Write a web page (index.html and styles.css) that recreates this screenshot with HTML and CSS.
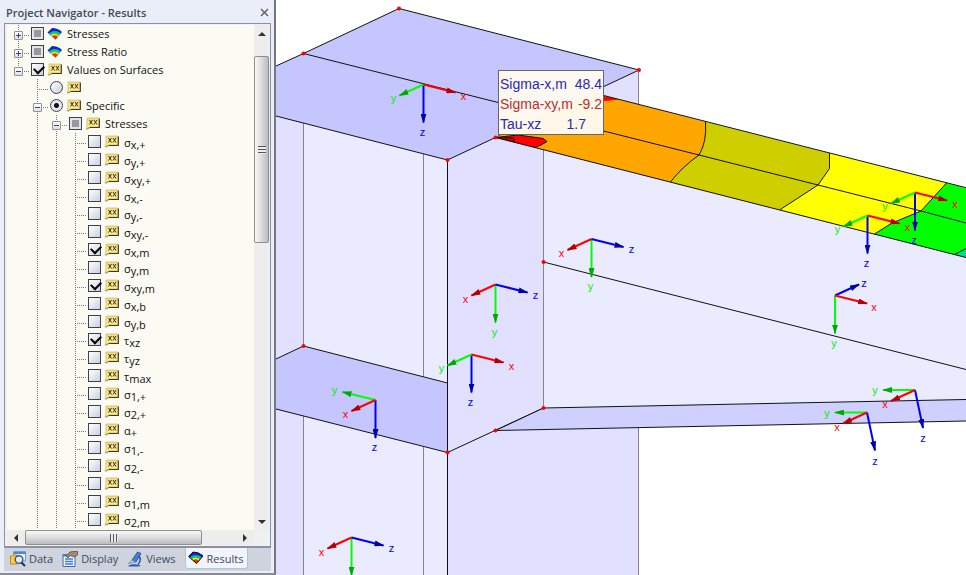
FILE: index.html
```html
<!DOCTYPE html>
<html lang="en">
<head>
<meta charset="utf-8">
<title>Project Navigator - Results</title>
<link rel="stylesheet" href="styles.css">
</head>
<body>
<svg class="sprite" aria-hidden="true">
  <defs>
    <linearGradient id="note-fill" x1="0" y1="0" x2="0" y2="1"><stop offset="0" stop-color="#f3d983"/><stop offset="1" stop-color="#fbf58a"/></linearGradient>
    <symbol id="note" viewBox="0 0 16 14">
      <path d="M3 2H15V11H5L1 13L3 10Z" fill="#55503c" opacity=".75"/>
      <path d="M2 1H14V10H4.500L1 12L2 9Z" fill="url(#note-fill)" stroke="#c2ab55" stroke-width=".6"/>
      <path d="M14.300 1.500V10.500H5" fill="none" stroke="#3c382b" stroke-width="1"/>
      <path d="M4.500 3L7.500 7.500M7.500 3L4.500 7.500M9 3L12 7.500M12 3L9 7.500" stroke="#3a321c" stroke-width="1"/>
    </symbol>
    <symbol id="fan" viewBox="0 0 16 14">
      <path d="M0.500 5.500L5 1Q11 1 15 5L8.500 12.500Z" fill="#1722c5"/>
      <path d="M1.500 6.500Q7 1.500 13.800 6.300L8.500 12.300Z" fill="#00b4f0"/>
      <path d="M2.500 7.300Q7.500 3 12.800 7.500L8.500 12.300Z" fill="#19d52b"/>
      <path d="M3.700 8.300Q7.800 5 11.800 8.600L8.500 12.300Z" fill="#fff000"/>
      <path d="M5 9.500Q8 7 10.800 9.700L8.500 12.500Z" fill="#f42a10"/>
    </symbol>
    <symbol id="fan-outlined" viewBox="0 0 16 14">
      <use href="#fan" width="16" height="14"/>
      <path d="M0.700 5.500L5 1Q11 1 15 5L8.500 12.500Z" fill="none" stroke="#111" stroke-width="1"/>
    </symbol>
    <symbol id="data" viewBox="0 0 16 16">
      <path d="M4 1H15.500V10H4Z" fill="#eaf2fd" stroke="#6b93d5"/>
      <path d="M3.500 0.500H16V3H3.500Z" fill="#4f85df"/>
      <path d="M0.500 5H3L4 4H7V13H0.500Z" fill="#f8cd45" stroke="#be8918"/>
      <circle cx="9" cy="8.500" r="3.800" fill="#d9ebfc" stroke="#40577e" stroke-width="1.400"/>
      <path d="M11.500 11.500L15 15" stroke="#20365f" stroke-width="2.200"/>
    </symbol>
    <symbol id="display" viewBox="0 0 16 16">
      <path d="M1 3.500H13V15.500H1Z" fill="#f3f8ff" stroke="#3f67a9"/>
      <path d="M1 3H8V5.500H1Z" fill="#4c79c7"/>
      <path d="M3 8H11M3 10.500H11M3 13H11" stroke="#397ede" stroke-width="1.300"/>
      <path d="M4 5L8 1L11 0.500H15.500V4L12 6L8 4.500L6 7Z" fill="#a68772" stroke="#544137" stroke-width=".7"/>
    </symbol>
    <symbol id="views" viewBox="0 0 16 16">
      <path d="M1 15C4 13 7 12.500 14 14.500L12 15.500H2Z" fill="#275eae"/>
      <path d="M10.500 1L14 2.500L9 11L5 9Z" fill="#477fd0" stroke="#214c94" stroke-width=".8"/>
      <path d="M5 9L1.500 12.500L8.500 11Z" fill="#c7dcf4" stroke="#5277b0" stroke-width=".7"/>
      <path d="M12 5Q15 9 11 13.500" fill="none" stroke="#2b5498" stroke-width="1.500"/>
    </symbol>
  </defs>
</svg>
<div class="app">
  <aside class="navigator">
    <header class="titlebar">
      <h1>Project Navigator - Results</h1>
      <button class="close" aria-label="Close"><svg viewBox="0 0 9 9"><path d="M1 1L8 8M8 1L1 8" stroke="#555" stroke-width="1.200"/></svg></button>
    </header>
    <div class="pane">
      <ul class="tree root">
        <li><div class="row"><button class="twig plus" aria-label="Expand"></button><label><input type="checkbox" class="mixed"><svg class="icon"><use href="#fan"/></svg><span>Stresses</span></label></div></li>
        <li><div class="row"><button class="twig plus" aria-label="Expand"></button><label><input type="checkbox" class="mixed"><svg class="icon"><use href="#fan"/></svg><span>Stress Ratio</span></label></div></li>
        <li><div class="row"><button class="twig" aria-label="Collapse"></button><label><input type="checkbox" checked><svg class="icon"><use href="#note"/></svg><span>Values on Surfaces</span></label></div>
          <ul class="tree">
            <li><div class="row"><label><input type="radio" name="values" aria-label="All values"><svg class="icon"><use href="#note"/></svg></label></div></li>
            <li><div class="row"><button class="twig" aria-label="Collapse"></button><label><input type="radio" name="values" checked><svg class="icon"><use href="#note"/></svg><span>Specific</span></label></div>
              <ul class="tree">
                <li><div class="row"><button class="twig" aria-label="Collapse"></button><label><input type="checkbox" class="mixed"><svg class="icon"><use href="#note"/></svg><span>Stresses</span></label></div>
                  <ul class="tree symbols">
                    <li><div class="row"><label><input type="checkbox"><svg class="icon"><use href="#note"/></svg><span>σ<sub>x,+</sub></span></label></div></li>
                    <li><div class="row"><label><input type="checkbox"><svg class="icon"><use href="#note"/></svg><span>σ<sub>y,+</sub></span></label></div></li>
                    <li><div class="row"><label><input type="checkbox"><svg class="icon"><use href="#note"/></svg><span>σ<sub>xy,+</sub></span></label></div></li>
                    <li><div class="row"><label><input type="checkbox"><svg class="icon"><use href="#note"/></svg><span>σ<sub>x,-</sub></span></label></div></li>
                    <li><div class="row"><label><input type="checkbox"><svg class="icon"><use href="#note"/></svg><span>σ<sub>y,-</sub></span></label></div></li>
                    <li><div class="row"><label><input type="checkbox"><svg class="icon"><use href="#note"/></svg><span>σ<sub>xy,-</sub></span></label></div></li>
                    <li><div class="row"><label><input type="checkbox" checked><svg class="icon"><use href="#note"/></svg><span>σ<sub>x,m</sub></span></label></div></li>
                    <li><div class="row"><label><input type="checkbox"><svg class="icon"><use href="#note"/></svg><span>σ<sub>y,m</sub></span></label></div></li>
                    <li><div class="row"><label><input type="checkbox" checked><svg class="icon"><use href="#note"/></svg><span>σ<sub>xy,m</sub></span></label></div></li>
                    <li><div class="row"><label><input type="checkbox"><svg class="icon"><use href="#note"/></svg><span>σ<sub>x,b</sub></span></label></div></li>
                    <li><div class="row"><label><input type="checkbox"><svg class="icon"><use href="#note"/></svg><span>σ<sub>y,b</sub></span></label></div></li>
                    <li><div class="row"><label><input type="checkbox" checked><svg class="icon"><use href="#note"/></svg><span>τ<sub>xz</sub></span></label></div></li>
                    <li><div class="row"><label><input type="checkbox"><svg class="icon"><use href="#note"/></svg><span>τ<sub>yz</sub></span></label></div></li>
                    <li><div class="row"><label><input type="checkbox"><svg class="icon"><use href="#note"/></svg><span>τ<sub>max</sub></span></label></div></li>
                    <li><div class="row"><label><input type="checkbox"><svg class="icon"><use href="#note"/></svg><span>σ<sub>1,+</sub></span></label></div></li>
                    <li><div class="row"><label><input type="checkbox"><svg class="icon"><use href="#note"/></svg><span>σ<sub>2,+</sub></span></label></div></li>
                    <li><div class="row"><label><input type="checkbox"><svg class="icon"><use href="#note"/></svg><span>α<sub>+</sub></span></label></div></li>
                    <li><div class="row"><label><input type="checkbox"><svg class="icon"><use href="#note"/></svg><span>σ<sub>1,-</sub></span></label></div></li>
                    <li><div class="row"><label><input type="checkbox"><svg class="icon"><use href="#note"/></svg><span>σ<sub>2,-</sub></span></label></div></li>
                    <li><div class="row"><label><input type="checkbox"><svg class="icon"><use href="#note"/></svg><span>α<sub>-</sub></span></label></div></li>
                    <li><div class="row"><label><input type="checkbox"><svg class="icon"><use href="#note"/></svg><span>σ<sub>1,m</sub></span></label></div></li>
                    <li><div class="row"><label><input type="checkbox"><svg class="icon"><use href="#note"/></svg><span>σ<sub>2,m</sub></span></label></div></li>
                  </ul>
                </li>
              </ul>
            </li>
          </ul>
        </li>
      </ul>
      <div class="bar vertical">
        <button class="arrow up" aria-label="Scroll up"></button>
        <div class="track"><div class="thumb"><i></i></div></div>
        <button class="arrow down" aria-label="Scroll down"></button>
      </div>
      <div class="bar horizontal">
        <button class="arrow left" aria-label="Scroll left"></button>
        <div class="track"><div class="thumb"><i></i></div></div>
        <button class="arrow right" aria-label="Scroll right"></button>
      </div>
    </div>
    <nav class="tabs">
      <button class="tab"><svg><use href="#data"/></svg>Data</button>
      <button class="tab"><svg><use href="#display"/></svg>Display</button>
      <button class="tab"><svg><use href="#views"/></svg>Views</button>
      <button class="tab active"><svg><use href="#fan-outlined"/></svg>Results</button>
    </nav>
  </aside>
  <main class="viewport">
    <svg class="model" viewBox="276 0 690 575" preserveAspectRatio="xMinYMin slice">
      <defs>
        <marker id="head-x" markerUnits="userSpaceOnUse" markerWidth="10" markerHeight="6" refX="9" refY="3" orient="auto"><path d="M0 0L10 3L0 6Z" fill="#b40000"/></marker>
        <marker id="head-y" markerUnits="userSpaceOnUse" markerWidth="10" markerHeight="6" refX="9" refY="3" orient="auto"><path d="M0 0L10 3L0 6Z" fill="#00a800"/></marker>
        <marker id="head-z" markerUnits="userSpaceOnUse" markerWidth="10" markerHeight="6" refX="9" refY="3" orient="auto"><path d="M0 0L10 3L0 6Z" fill="#0000a8"/></marker>
        <g id="axes-top">
          <path class="az" d="M0 0V38"/><path class="ay" d="M0 0L-24 11"/><path class="ax" d="M0 0L32 8"/>
          <text class="tx" x="40" y="15">x</text><text class="ty" x="-30" y="17">y</text><text class="tz" x="-1" y="51">z</text>
        </g>
        <g id="axes-side">
          <path class="ay" d="M0 0V38"/><path class="ax" d="M0 0L-24 11"/><path class="az" d="M0 0L32 8"/>
          <text class="tx" x="-30" y="18">x</text><text class="ty" x="-1" y="51">y</text><text class="tz" x="40" y="14">z</text>
        </g>
        <g id="axes-slab">
          <path class="az" d="M0 0V38"/><path class="ay" d="M0 0L-33 -8"/><path class="ax" d="M0 0L-24 11"/>
          <text class="tx" x="-30" y="18">x</text><text class="ty" x="-41" y="-6">y</text><text class="tz" x="-1" y="51">z</text>
        </g>
        <g id="axes-web">
          <path class="az" d="M0 0L24 -11"/><path class="ay" d="M0 0V38"/><path class="ax" d="M0 0L32 8"/>
          <text class="tx" x="39" y="15">x</text><text class="ty" x="-1" y="51">y</text><text class="tz" x="29" y="-9">z</text>
        </g>
        <g id="axes-flange">
          <path class="az" d="M0 0L8 38"/><path class="ay" d="M0 0H-32"/><path class="ax" d="M0 0L-24 11"/>
          <text class="tx" x="-30" y="18">x</text><text class="ty" x="-40" y="4">y</text><text class="tz" x="8" y="52">z</text>
        </g>
      </defs>

      <!-- column faces -->
      <path class="shade" d="M276 115H303.500V575H276ZM447.500 130H543.500V425H639V575H447.500ZM590 80L639 70V110H590Z"/>
      <path class="light" d="M303.500 115H447.500V575H303.500Z"/>
      <path class="light" d="M543.500 145L966 257V400L543.500 408Z"/>
      <path class="grey" d="M303.500 120V575M423.500 150V575M543.500 148V408M638.500 70V106M638.500 428V575"/>

      <!-- slabs -->
      <path class="slab" d="M276 66L303.500 53.500L399 8.500L639 70L447.500 160L276 116Z"/>
      <path class="edge" d="M276 66L303.500 53.500L399 8.500L639 70L447.500 160L276 116M303.500 53.500L520 108"/>
      <path class="slab" d="M276 359L303.500 346L447.500 383V452.500L276 409Z"/>
      <path class="edge" d="M276 359L303.500 346L447.500 383M276 409L447.500 452.500L543.500 408"/>
      <path class="edge" d="M447.500 160V575"/>

      <!-- stress bands -->
      <path fill="#ffa600" d="M495.500 137.500L590 92L705.500 121.700Q707 142 699 155Q682 167 670.500 182L495.500 137.500Z"/>
      <path fill="#cfcf00" d="M705.500 121.700L829.500 153.300V168.500L818 185L780 209.700L670.500 182Q682 167 699 155Q707 142 705.500 121.700Z"/>
      <path fill="#ffff00" d="M829.500 153.300L946.500 183L921 211L892 223L874.500 234L780 209.700L818 185L829.500 168.500Z"/>
      <path fill="#00ff00" d="M946.500 183L966 188V257.500L874.500 234L892 223L921 211Z"/>
      <path fill="#00dd87" d="M954.500 254.500L966 248.500V257.500Z"/>
      <path fill="#ff0000" d="M495.500 137.500L518 135L543 138.500L547 141.500L541 145L535 147.500ZM595 94L619 99.500L596 102Z"/>
      <path fill="#c80000" d="M495.500 137.500L514 138V142Z"/>
      <path class="edge" d="M590 92L966 187.700M560 120L699 155L818 185L921 211L966 223M495.500 137.500L966 257.500M705.500 121.700Q707 142 699 155Q682 167 670.500 182M829.500 153.300V168.500L818 185L780 209.700M946.500 183L921 211L892 223L874.500 234M954.500 254.500L966 248.500M495.500 137.500L518 135L543 138.500L547 141.500L541 145L535 147.500M495.500 137.500L514 138V142"/>

      <!-- web line and bottom flange -->
      <path class="edge" d="M543.500 262L966 369.500"/>
      <path fill="#d0d0ff" d="M495.500 430.500L543.500 408L966 399.500V421Z"/>
      <path class="edge" d="M495.500 430.500L543.500 408L966 399.500M966 421L495.500 430.500"/>

      <g fill="#f00">
        <circle cx="399" cy="8.500" r="2"/><circle cx="303.500" cy="53.500" r="2"/><circle cx="639" cy="70" r="2"/><circle cx="495.500" cy="137.500" r="2"/><circle cx="447.500" cy="160" r="2"/><circle cx="303.500" cy="346" r="2"/><circle cx="447.500" cy="452.500" r="2"/><circle cx="495.500" cy="430.500" r="2"/><circle cx="543.500" cy="262" r="2"/><circle cx="543.500" cy="408" r="2"/>
      </g>

      <use href="#axes-top" x="423.500" y="84.500"/>
      <use href="#axes-top" x="471.500" y="354.500"/>
      <use href="#axes-top" x="867.500" y="215.500"/>
      <use href="#axes-top" x="915" y="192.500"/>
      <use href="#axes-side" x="495.500" y="284.500"/>
      <use href="#axes-side" x="591.500" y="239"/>
      <use href="#axes-side" x="351.500" y="537.500"/>
      <use href="#axes-slab" x="375.500" y="400"/>
      <use href="#axes-web" x="835" y="295.500"/>
      <use href="#axes-flange" x="915" y="390"/>
      <use href="#axes-flange" x="867" y="412.500"/>

      <g class="values">
        <rect x="498.500" y="70.500" width="105" height="64"/>
        <text x="500" y="89">Sigma-x,m</text><text x="602" y="89" text-anchor="end">48.4</text>
        <text class="neg" x="500" y="109">Sigma-xy,m</text><text class="neg" x="602" y="109" text-anchor="end">-9.2</text>
        <text x="500" y="129">Tau-xz</text><text x="586" y="129" text-anchor="end">1.7</text>
      </g>
    </svg>
  </main>
</div>
</body>
</html>
```
FILE: styles.css
```css
* { box-sizing: border-box; }

body {
  margin: 0;
  font-family: "Open Sans", "Noto Sans", sans-serif;
  font-size: 12px;
  color: #111;
  background: #fff;
}

button { padding: 0; border: 0; background: none; font: inherit; color: inherit; }
.sprite { position: absolute; width: 0; height: 0; }

.app {
  display: grid;
  grid-template-columns: 276px 1fr;
  height: 100vh;
  overflow: hidden;
}

/* navigator panel */
.navigator {
  display: flex;
  flex-direction: column;
  min-height: 0;
  padding: 1px 3px 2px 4px;
  background: #e9eef8;
  border-right: 2px solid #777783;
  border-bottom: 2px solid #8a8b96;
}

.titlebar {
  flex: none;
  display: flex;
  align-items: center;
  justify-content: space-between;
  height: 22px;
  padding: 0 2px 0 2px;
}

h1 { margin: 0; font-size: 11px; font-weight: 600; color: #444a55; }
.close { width: 9px; height: 9px; }
.close svg { display: block; width: 9px; height: 9px; }

.pane {
  flex: 1;
  min-height: 0;
  display: grid;
  grid-template-columns: 1fr 15px;
  grid-template-rows: 1fr 15px;
  border: 1px solid #8c90a2;
  border-bottom-width: 2px;
  padding: 1px 1px 1px 2px;
  background: #f0f0f0;
}

/* tree */
.tree { margin: 0; padding: 0; list-style: none; }
.root { min-height: 0; overflow: hidden; background: #fbfbf4; }
.tree .tree { padding-left: 19px; }

.tree li {
  background: repeating-linear-gradient(#777 0 1px, transparent 1px 2px) 11px 0 / 1px 100% no-repeat;
}
.root > li:last-child { background-size: 1px 9px; }

.row {
  display: flex;
  align-items: center;
  height: 18px;
  padding-left: 11px;
  background: repeating-linear-gradient(90deg, #777 0 1px, transparent 1px 2px) 11px 10px / 12px 1px no-repeat;
}

.row label { display: flex; align-items: center; flex: 1; padding-left: 13px; }
.twig + label { padding-left: 8px; }

.twig {
  flex: none;
  width: 9px;
  height: 9px;
  margin: 2px 0 0 -4px;
  border: 1px solid #919191;
  border-radius: 1px;
  background:
    linear-gradient(#36477f, #36477f) center / 5px 1px no-repeat,
    linear-gradient(#fff, #dde0e2);
}
.plus {
  background:
    linear-gradient(#36477f, #36477f) center / 5px 1px no-repeat,
    linear-gradient(#36477f, #36477f) center / 1px 5px no-repeat,
    linear-gradient(#fff, #dde0e2);
}

.row input {
  appearance: none;
  flex: none;
  width: 13px;
  height: 13px;
  margin: 0 3px 1px 0;
  border: 1px solid #3f4147;
  background: linear-gradient(135deg, #fff, #c8d0de);
}
.row input[type="radio"] { border-radius: 50%; }
.row input[type="radio"]:checked { background: radial-gradient(circle, #111 0 2px, #e4e8ef 3px); }
.row input[type="checkbox"]:checked::after {
  content: "";
  display: block;
  width: 8px;
  height: 5px;
  margin: 1px 0 0 2px;
  border: solid #000;
  border-width: 0 0 2px 2px;
  transform: rotate(-45deg);
}
.row .mixed { background: linear-gradient(#999, #999) center / 7px 7px no-repeat, #e1e5ed; }

.icon { flex: none; width: 16px; height: 14px; margin-right: 4px; }
.row span { font-size: 11px; line-height: 18px; white-space: nowrap; }
.symbols span { padding-top: 2px; }
sub { font-size: 11px; line-height: 1; vertical-align: -2px; }

/* scroll bars */
.bar { display: flex; background: #ededee; }
.vertical { flex-direction: column; }
.track { flex: 1; min-height: 0; display: flex; }
.vertical .track { flex-direction: column; padding-top: 14px; }
.thumb {
  display: grid;
  place-items: center;
  border: 1px solid #8f8f8f;
  border-radius: 2px;
}
.vertical .thumb { height: 41%; background: linear-gradient(90deg, #f8f8f8, #dcdcdd 50%, #bbbbbe); }
.horizontal .thumb { width: 84%; background: linear-gradient(#f8f8f8, #dcdcdd 50%, #bbbbbe); }
.thumb i { width: 8px; height: 8px; background: repeating-linear-gradient(#555 0 1px, #eee 1px 3px); }
.horizontal .thumb i { background: repeating-linear-gradient(90deg, #555 0 1px, #eee 1px 3px); }

.arrow { flex: none; display: grid; place-items: center; width: 15px; height: 17px; }
.horizontal .arrow { width: 18px; height: 15px; }
.arrow::before { content: ""; border: 4px solid transparent; }
.up::before { border-top: 0; border-bottom-color: #333; }
.down::before { border-bottom: 0; border-top-color: #333; }
.left::before { border-left: 0; border-right-color: #333; }
.right::before { border-right: 0; border-left-color: #333; }

/* tabs */
.tabs {
  flex: none;
  display: flex;
  gap: 9px;
  height: 23px;
  padding-left: 6px;
  background: #ced3dd;
}
.tab { display: flex; align-items: center; gap: 3px; height: 21px; font-size: 11px; color: #3f4962; }
.tab svg { width: 16px; height: 16px; }
.active { padding: 0 4px 0 2px; border: 1px solid #a8cbd3; border-top: 0; border-radius: 0 0 3px 3px; background: #f1f4fa; }
.active svg { height: 14px; }

/* model view */
.viewport { min-width: 0; min-height: 0; overflow: hidden; }
.model { display: block; width: 100%; height: 100%; font-family: "Liberation Sans", Arial, sans-serif; font-size: 11px; }
.shade { fill: #e1e1ff; }
.light { fill: #ebebff; }
.slab { fill: #c6c6ff; }
.edge { fill: none; stroke: #111; stroke-width: 1; }
.grey { fill: none; stroke: #85858f; stroke-width: 1; }
.ax, .ay, .az { fill: none; stroke-width: 2; }
.ax { stroke: #f00; marker-end: url(#head-x); }
.ay { stroke: #0f0; marker-end: url(#head-y); }
.az { stroke: #00f; marker-end: url(#head-z); }
.tx, .ty, .tz { text-anchor: middle; }
.tx { fill: #f00; }
.ty { fill: #0e0; }
.tz { fill: #00f; }
.values rect { fill: #fffaf0; fill-opacity: .97; stroke: #666; }
.values text { font-size: 14px; fill: #2929b8; }
.values .neg { fill: #bd2e2e; }
```
